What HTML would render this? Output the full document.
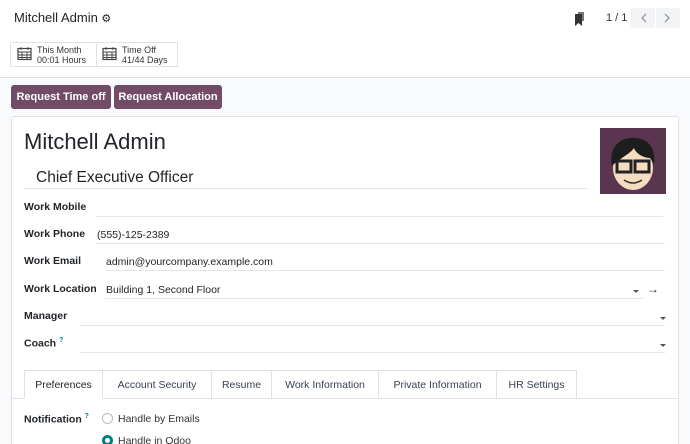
<!DOCTYPE html>
<html style="width:690px;height:444px;overflow:hidden"><head><style>
*{box-sizing:border-box;margin:0;padding:0}
body{width:690px;height:444px;overflow:hidden;background:#f9fafb;font-family:"Liberation Sans",sans-serif;color:#212529;position:relative;font-size:11px}
.a{position:absolute;white-space:nowrap}
.top{position:absolute;left:0;top:0;width:690px;height:78px;background:#fff;border-bottom:1px solid #dee2e6}
.btn{position:absolute;top:85px;height:24px;background:#714b67;color:#fff;font-weight:bold;font-size:11px;border-radius:3px;line-height:24px;text-align:center}
.sheet{position:absolute;left:11px;top:116px;width:668px;height:340px;background:#fff;border:1px solid #dee2e6;border-radius:3px}
.lbl{position:absolute;font-weight:bold;font-size:10.5px;color:#212529}
.ln{position:absolute;height:1px;background:#e5e7eb}
.val{position:absolute;font-size:10.5px}
.tab{position:absolute;top:370px;height:29px;line-height:29px;text-align:center;font-size:10.5px;color:#374151;border:1px solid #dee2e6;border-left:none;background:#fff}
.car{position:absolute;width:0;height:0;border-left:3px solid transparent;border-right:3px solid transparent;border-top:3px solid #555}
</style></head><body>
<div class="top"></div>
<div class="a" style="left:14px;top:10px;font-size:13px">Mitchell Admin <span style="font-size:11px">⚙</span></div>
<div class="a" style="left:10px;top:42px;width:168px;height:25px;border:1px solid #dee2e6;background:#fff"></div>
<div class="a" style="left:96px;top:42px;width:1px;height:25px;background:#dee2e6"></div>
<svg class="a" style="left:17px;top:46px" width="15" height="15" viewBox="0 0 15 15"><rect x="1" y="2.5" width="13" height="11" fill="none" stroke="#444" stroke-width="1.2"/><path d="M1 6h13M4 1v3M11 1v3M1 9h13M1 11.5h13M5 6v8M10 6v8" stroke="#444" stroke-width=".9"/></svg>
<div class="a" style="left:37px;top:45px;font-size:9px;line-height:10px;color:#333">This Month<br>00:01 Hours</div>
<svg class="a" style="left:102px;top:46px" width="15" height="15" viewBox="0 0 15 15"><rect x="1" y="2.5" width="13" height="11" fill="none" stroke="#444" stroke-width="1.2"/><path d="M1 6h13M4 1v3M11 1v3M1 9h13M1 11.5h13M5 6v8M10 6v8" stroke="#444" stroke-width=".9"/></svg>
<div class="a" style="left:122px;top:45px;font-size:9px;line-height:10px;color:#333">Time Off<br>41/44 Days</div>
<svg class="a" style="left:574px;top:11px" width="12" height="16" viewBox="0 0 12 16"><rect x="4" y="1" width="6" height="9" fill="#777"/><path d="M1 3h7v12l-3.5-3L1 15z" fill="#333"/></svg>
<div class="a" style="left:606px;top:12px;font-size:11px;color:#333">1 / 1</div>
<div class="a" style="left:631px;top:8px;width:24px;height:20px;background:#f3f4f6"></div>
<div class="a" style="left:656px;top:8px;width:24px;height:20px;background:#f3f4f6"></div>
<svg class="a" style="left:631px;top:8px" width="49" height="20"><path d="M15 6l-4 4 4 4M34 6l4 4-4 4" stroke="#888" stroke-width="1.1" fill="none"/></svg>
<div class="btn" style="left:11px;width:100px">Request Time off</div>
<div class="btn" style="left:114px;width:108px">Request Allocation</div>
<div class="sheet"></div>
<div class="a" style="left:24px;top:129px;font-size:22px">Mitchell Admin</div>
<div class="a" style="left:36px;top:169px;font-size:15.5px">Chief Executive Officer</div>
<div class="ln" style="left:24px;top:188px;width:564px"></div>
<svg class="a" style="left:600px;top:128px" width="66" height="66" viewBox="0 0 66 66"><rect width="66" height="66" fill="#5a3550"/><ellipse cx="33" cy="40" rx="20" ry="22" fill="#f6dcc0"/><path d="M12 38c-4-20 10-30 24-28 12 1 20 10 18 26l-4-6c-6 0-14-4-16-10-4 6-14 10-22 18z" fill="#1d1d1d"/><rect x="17" y="33" width="14" height="11" fill="none" stroke="#222" stroke-width="3"/><rect x="35" y="33" width="14" height="11" fill="none" stroke="#222" stroke-width="3"/><path d="M24 52q9 6 18 0" stroke="#333" stroke-width="1.5" fill="none"/></svg>
<div class="lbl" style="left:24px;top:201px">Work Mobile</div><div class="ln" style="left:96px;top:216px;width:567px"></div>
<div class="lbl" style="left:24px;top:228px">Work Phone</div><div class="val" style="left:97px;top:229px">(555)-125-2389</div><div class="ln" style="left:96px;top:243px;width:569px"></div>
<div class="lbl" style="left:24px;top:255px">Work Email</div><div class="val" style="left:106px;top:256px">admin@yourcompany.example.com</div><div class="ln" style="left:105px;top:270px;width:560px"></div>
<div class="lbl" style="left:24px;top:283px">Work Location</div><div class="val" style="left:106px;top:284px">Building 1, Second Floor</div><div class="ln" style="left:105px;top:298px;width:538px"></div>
<div class="car" style="left:633px;top:290px"></div><div class="a" style="left:647px;top:282px;font-size:12px">→</div>
<div class="lbl" style="left:24px;top:310px">Manager</div><div class="ln" style="left:80px;top:325px;width:585px"></div><div class="car" style="left:660px;top:317px"></div>
<div class="lbl" style="left:24px;top:337px">Coach <sup style="color:#017e84;font-size:7px">?</sup></div><div class="ln" style="left:80px;top:352px;width:585px"></div><div class="car" style="left:660px;top:344px"></div>
<div class="ln" style="left:12px;top:398px;width:666px;background:#dee2e6"></div>
<div class="tab" style="left:24px;width:79px;border-left:1px solid #dee2e6;border-bottom-color:#fff;color:#212529">Preferences</div>
<div class="tab" style="left:103px;width:109px">Account Security</div>
<div class="tab" style="left:212px;width:60px">Resume</div>
<div class="tab" style="left:272px;width:107px">Work Information</div>
<div class="tab" style="left:379px;width:118px">Private Information</div>
<div class="tab" style="left:497px;width:80px">HR Settings</div>
<div class="lbl" style="left:24px;top:413px">Notification <sup style="color:#017e84;font-size:7px">?</sup></div>
<div class="a" style="left:102px;top:413px;width:11px;height:11px;border:1px solid #bbb;border-radius:50%"></div>
<div class="val" style="left:118px;top:413px;color:#333">Handle by Emails</div>
<div class="a" style="left:102px;top:435px;width:11px;height:11px;border:3.5px solid #017e84;border-radius:50%"></div>
<div class="val" style="left:118px;top:435px;color:#333">Handle in Odoo</div>
</body></html>
